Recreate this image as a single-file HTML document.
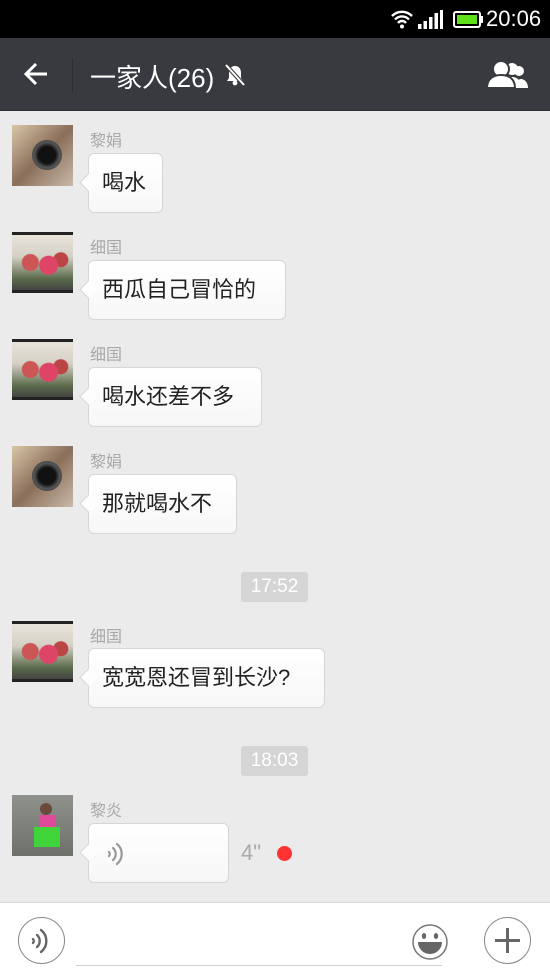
<!DOCTYPE html>
<html><head><meta charset="utf-8"><style>
*{margin:0;padding:0;box-sizing:border-box}
body{width:550px;height:977px;overflow:hidden;background:#ebebeb;font-family:"Liberation Sans","Noto Sans CJK SC",sans-serif;position:relative}
.abs{position:absolute}
.sb{left:0;top:0;width:550px;height:38px;background:#000}
.hd{left:0;top:38px;width:550px;height:73px;background:#393a3f;border-bottom:1px solid #2a2b2f}
.av{position:absolute;left:12px;width:61px;height:61px}
.nm{position:absolute;left:90px;font-size:16px;color:#a8a8a8}
.bb{position:absolute;left:88px;height:60px;background:linear-gradient(#fff,#f7f7f7);border:1px solid #d6d6d6;border-radius:6px;font-size:22px;color:#222;line-height:58px;padding-left:13px}
.bb:before{content:"";position:absolute;left:-7px;top:22px;width:12px;height:12px;background:#fdfdfd;border-left:1px solid #d6d6d6;border-bottom:1px solid #d6d6d6;transform:rotate(45deg)}
.ts{position:absolute;left:241px;width:67px;height:30px;background:#d5d5d5;border-radius:3px;color:#fff;font-size:19px;text-align:center;line-height:30px}
.a1{background:linear-gradient(135deg,#d9c6a8,#8a6f5a 50%,#c9b9a8)}
.a2{background:#222;padding:3px 0}
.a2 div{width:100%;height:100%;background:radial-gradient(circle at 30% 50%,#c55 0,#c55 8px,transparent 9px),radial-gradient(circle at 60% 55%,#d46 0,#d46 9px,transparent 10px),radial-gradient(circle at 80% 45%,#b44 0,#b44 7px,transparent 8px),linear-gradient(#e8e4dc,#d4d0c4 40%,#5a6a4a 80%,#444)}
.a3{background:linear-gradient(#8f928c,#6e706b)}
</style></head><body>
<div class="abs sb">
<svg class="abs" style="left:390px;top:9px" width="24" height="20" viewBox="0 0 24 20"><path d="M2 7a14 14 0 0 1 20 0M5 10.5a9.5 9.5 0 0 1 14 0M8 14a5 5 0 0 1 8 0" stroke="#fff" stroke-width="2.4" fill="none"/><circle cx="12" cy="17.5" r="2" fill="#fff"/></svg>
<svg class="abs" style="left:418px;top:10px" width="25" height="19"><rect x="0" y="14" width="3.5" height="5" fill="#fff"/><rect x="5.5" y="11" width="3.5" height="8" fill="#fff"/><rect x="11" y="7" width="3.5" height="12" fill="#fff"/><rect x="16.5" y="3" width="3.5" height="16" fill="#fff"/><rect x="22" y="0" width="3" height="19" fill="#fff"/></svg>
<div class="abs" style="left:453px;top:11px;width:28px;height:17px;border:2px solid #fff;border-radius:3px;padding:2px"><div style="width:100%;height:100%;background:#5fe01b"></div></div>
<div class="abs" style="left:481px;top:16px;width:2px;height:7px;background:#fff"></div>
<div class="abs" style="left:486px;top:6px;color:#fff;font-size:22px">20:06</div>
</div>
<div class="abs hd">
<svg class="abs" style="left:23px;top:24px" width="26" height="24"><path d="M24 12H3M13 2L3 12l10 10" stroke="#fff" stroke-width="3" fill="none"/></svg>
<div class="abs" style="left:72px;top:20px;width:1px;height:34px;background:#2c2d31"></div>
<div class="abs" style="left:90px;top:20px;color:#fff;font-size:26px">一家人(26)</div>
<svg class="abs" style="left:223px;top:25px" width="24" height="24" viewBox="0 0 24 24"><path d="M12 3c-4 0-6 3-6 7v5l-2 3h16l-2-3v-5c0-4-2-7-6-7z" fill="#fff"/><circle cx="12" cy="20" r="2.4" fill="#fff"/><path d="M3 2l18 20" stroke="#393a3f" stroke-width="4"/><path d="M3 2l18 20" stroke="#fff" stroke-width="2"/></svg>
<svg class="abs" style="left:486px;top:22px" width="42" height="28" viewBox="0 0 42 28"><circle cx="26" cy="9" r="6" fill="#fff"/><path d="M17 28c0-8 4-11 9-11s9 3 9 11z" fill="#fff"/><circle cx="15" cy="9" r="8" fill="#fff" stroke="#393a3f" stroke-width="2"/><path d="M1 28c0-9 6-13 14-13s14 4 14 13z" fill="#fff" stroke="#393a3f" stroke-width="2"/><circle cx="33" cy="11" r="5" fill="#fff"/><path d="M30 28c0-6 2-9 5-9s7 3 7 9z" fill="#fff"/></svg>
</div>

<div class="av a1" style="top:125px"><div style="position:absolute;left:20px;top:15px;width:30px;height:30px;border-radius:50%;background:radial-gradient(#111 40%,#555 60%,#222)"></div></div>
<div class="nm" style="top:127px">黎娟</div>
<div class="bb" style="top:153px;width:75px">喝水</div>

<div class="av a2" style="top:232px"><div></div></div>
<div class="nm" style="top:234px">细国</div>
<div class="bb" style="top:260px;width:198px">西瓜自己冒恰的</div>

<div class="av a2" style="top:339px"><div></div></div>
<div class="nm" style="top:341px">细国</div>
<div class="bb" style="top:367px;width:174px">喝水还差不多</div>

<div class="av a1" style="top:446px"><div style="position:absolute;left:20px;top:15px;width:30px;height:30px;border-radius:50%;background:radial-gradient(#111 40%,#555 60%,#222)"></div></div>
<div class="nm" style="top:448px">黎娟</div>
<div class="bb" style="top:474px;width:149px">那就喝水不</div>

<div class="ts" style="top:572px">17:52</div>

<div class="av a2" style="top:621px"><div></div></div>
<div class="nm" style="top:623px">细国</div>
<div class="bb" style="top:648px;width:237px">宽宽恩还冒到长沙?</div>

<div class="ts" style="top:746px">18:03</div>

<div class="av a3" style="top:795px"><div style="position:absolute;left:28px;top:8px;width:12px;height:12px;border-radius:50%;background:#6a4a3a"></div><div style="position:absolute;left:28px;top:20px;width:16px;height:14px;background:#e04a9a"></div><div style="position:absolute;left:22px;top:32px;width:26px;height:20px;background:#3ed43a"></div></div>
<div class="nm" style="top:797px">黎炎</div>
<div class="bb" style="top:823px;width:141px"><svg style="position:absolute;left:18px;top:17px" width="20" height="26" viewBox="0 0 20 26"><path d="M2 11a3 3 0 0 1 0 4M6 7a8 8 0 0 1 0 12M10 3a13 13 0 0 1 0 20" stroke="#999" stroke-width="2.2" fill="none" stroke-linecap="round"/></svg></div>
<div class="abs" style="left:241px;top:840px;font-size:22px;color:#aaa">4"</div>
<div class="abs" style="left:277px;top:846px;width:15px;height:15px;border-radius:50%;background:#f33"></div>

<div class="abs" style="left:0;top:902px;width:550px;height:75px;background:#fff;border-top:1px solid #d8d8d8">
<div class="abs" style="left:18px;top:14px;width:47px;height:47px;border-radius:50%;border:1.5px solid #888"></div>
<svg class="abs" style="left:30px;top:24px" width="20" height="28" viewBox="0 0 20 28"><path d="M3 12a3 3 0 0 1 0 4M7 8a8 8 0 0 1 0 12M11 3a14 14 0 0 1 0 22" stroke="#666" stroke-width="2.4" fill="none" stroke-linecap="round"/></svg>
<div class="abs" style="left:76px;top:62px;width:366px;height:1px;background:#d0d0d0"></div>
<svg class="abs" style="left:411px;top:20px" width="38" height="38" viewBox="0 0 38 38"><circle cx="19" cy="19" r="17" fill="#fff" stroke="#777" stroke-width="1.5"/><ellipse cx="13" cy="13" rx="2.2" ry="3" fill="#666"/><ellipse cx="25" cy="13" rx="2.2" ry="3" fill="#666"/><path d="M7 19h24a12 12 0 0 1-24 0z" fill="#666"/></svg>
<div class="abs" style="left:484px;top:14px;width:47px;height:47px;border-radius:50%;border:1.5px solid #888"></div>
<div class="abs" style="left:495px;top:36px;width:25px;height:2.5px;background:#666"></div>
<div class="abs" style="left:506px;top:25px;width:2.5px;height:25px;background:#666"></div>
</div>
</body></html>
